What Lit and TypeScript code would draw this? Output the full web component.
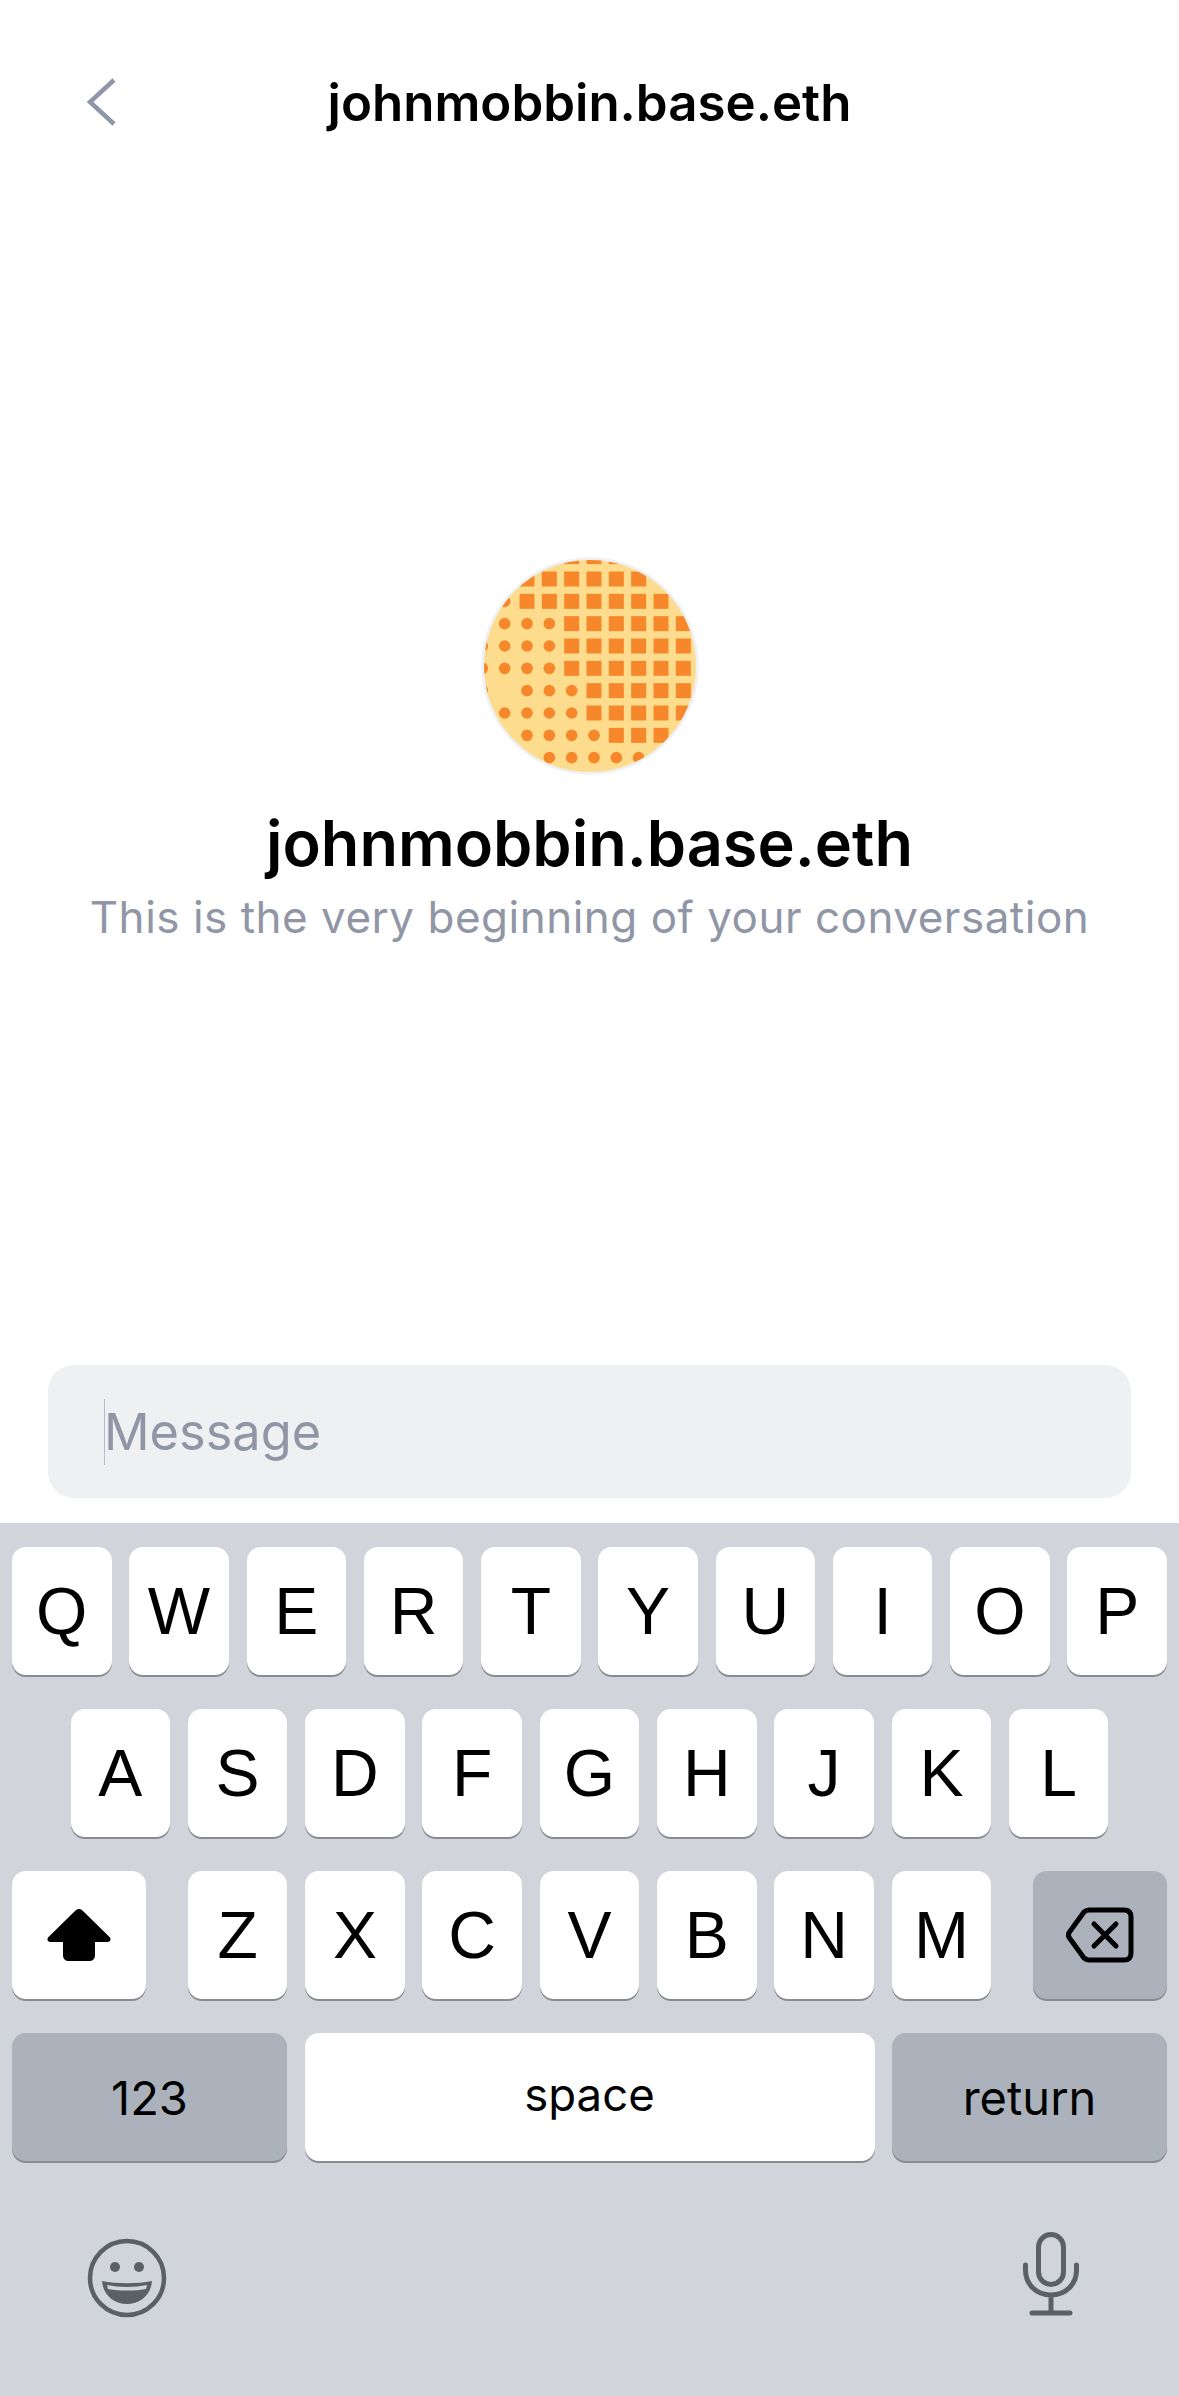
import { LitElement, html, css, svg } from 'lit';
import { customElement } from 'lit/decorators.js';

// avatar pattern: s = square, d = dot, . = empty, one string per row
const PATTERN = [
  '....sss...',
  '..ssssss..',
  '.dsssssss.',
  '.dddssssss',
  'ddddssssss',
  'ddddssssss',
  'd.dddsssss',
  '.ddddsssss',
  '..ddddssss',
  '...dddddd.',
];

const ROW_1 = ['Q', 'W', 'E', 'R', 'T', 'Y', 'U', 'I', 'O', 'P'];
const ROW_2 = ['A', 'S', 'D', 'F', 'G', 'H', 'J', 'K', 'L'];
const ROW_3 = ['Z', 'X', 'C', 'V', 'B', 'N', 'M'];

@customElement('app-root')
export class AppRoot extends LitElement {
  static styles = css`
    :host {
      display: block;
      width: 1179px;
      height: 2396px;
      background: #fff;
      font-family: Inter, 'Liberation Sans', sans-serif;
    }
    .screen {
      display: flex;
      flex-direction: column;
      height: 100%;
    }

    .header {
      display: grid;
      grid-template-columns: 1fr auto 1fr;
      align-items: center;
      height: 204px;
      padding: 0 87px;
      box-sizing: border-box;
      flex: none;
    }
    .back {
      display: block;
      width: 30px;
      height: 48px;
    }
    .header-title {
      font-size: 51px;
      font-weight: 600;
      color: #000;
      white-space: nowrap;
    }

    .intro {
      flex: 1;
      display: flex;
      flex-direction: column;
      align-items: center;
      padding-top: 352px;
    }
    .avatar {
      display: block;
      width: 220px;
      height: 220px;
    }
    .name {
      margin-top: 30px;
      font-size: 63px;
      line-height: 74px;
      font-weight: 600;
      color: #000;
    }
    .hint {
      margin-top: 7px;
      font-size: 44px;
      line-height: 60px;
      color: #9196a6;
      letter-spacing: 0.5px;
    }

    .composer {
      flex: none;
      display: flex;
      align-items: center;
      height: 133px;
      margin: 0 48px 25px;
      padding: 0 56px;
      border-radius: 26px;
      background: #eff0f2;
      font-size: 50.5px;
      color: #9196a6;
    }
    .caret {
      width: 1px;
      height: 66px;
      margin-right: -1px;
      background: #b4bad2;
    }

    .keyboard {
      flex: none;
      display: flex;
      flex-direction: column;
      gap: 34px;
      height: 873px;
      box-sizing: border-box;
      padding: 24px 12px 0;
      background: #d1d5db;
    }
    .row {
      display: flex;
      justify-content: space-between;
    }
    .row.middle {
      justify-content: center;
      gap: 17.8px;
    }
    .row.letters {
      width: 803.3px;
    }
    .key {
      display: flex;
      align-items: center;
      justify-content: center;
      width: 99.5px;
      height: 128px;
      border-radius: 14px;
      background: #fff;
      box-shadow: 0 2px 0 #888b90;
      color: #000;
      font-family: 'Liberation Sans', Arial, sans-serif;
      font-size: 66px;
    }
    .key.fn {
      background: #abb2bc;
    }
    .key.wide {
      width: 134px;
    }
    .key.label {
      font-family: Inter, 'Liberation Sans', sans-serif;
      font-size: 47px;
    }
    .key.num {
      width: 275px;
    }
    .key.space {
      width: 570px;
      padding-bottom: 6px;
      box-sizing: border-box;
      font-size: 45.5px;
    }

    .tools {
      display: flex;
      justify-content: space-between;
      align-items: flex-start;
      margin-top: 37px;
      padding: 0 88px 0 75px;
    }
    .tools svg {
      display: block;
    }
    .tools .emoji {
      margin-top: 6px;
    }
  `;

  private renderAvatar() {
    const cells = PATTERN.flatMap((row, r) =>
      [...row].map((cell, c) => {
        const x = 67 + c * 67;
        const y = 52 + r * 67;
        if (cell === 's') {
          return svg`<rect x=${x - 22.5} y=${y - 22.5} width="45" height="45" />`;
        }
        if (cell === 'd') {
          return svg`<circle cx=${x} cy=${y} r="17.5" />`;
        }
        return null;
      })
    );
    return html`
      <svg class="avatar" viewBox="60 50 660 660">
        <defs>
          <clipPath id="avatar-clip"><circle cx="390" cy="380" r="318" /></clipPath>
        </defs>
        <circle cx="390" cy="380" r="326" fill="#eef0f3" />
        <circle cx="390" cy="380" r="318" fill="#fedc8d" />
        <g clip-path="url(#avatar-clip)" fill="#f6872a">${cells}</g>
      </svg>
    `;
  }

  private renderKey(letter: string) {
    return html`<div class="key">${letter}</div>`;
  }

  render() {
    return html`
      <div class="screen">
        <div class="header">
          <svg class="back" viewBox="0 0 30 48">
            <path d="M27 2 L3 24 L27 46" fill="none" stroke="#8e96a8" stroke-width="4.5" />
          </svg>
          <div class="header-title">johnmobbin.base.eth</div>
        </div>

        <div class="intro">
          ${this.renderAvatar()}
          <div class="name">johnmobbin.base.eth</div>
          <div class="hint">This is the very beginning of your conversation</div>
        </div>

        <div class="composer"><span class="caret"></span>Message</div>

        <div class="keyboard">
          <div class="row">${ROW_1.map(k => this.renderKey(k))}</div>
          <div class="row middle">${ROW_2.map(k => this.renderKey(k))}</div>
          <div class="row">
            <div class="key wide">
              <svg width="66" height="54" viewBox="0 0 66 54">
                <path
                  d="M33 1 C34.5 1 35.5 1.6 36.5 2.6 L63.5 29 C65.5 31 64.5 34 61.5 34 H49 V47 C49 51 46.5 53 43 53 H23 C19.5 53 17 51 17 47 V34 H4.5 C1.5 34 .5 31 2.5 29 L29.5 2.6 C30.5 1.6 31.5 1 33 1 Z"
                  fill="#000"
                />
              </svg>
            </div>
            <div class="row letters">${ROW_3.map(k => this.renderKey(k))}</div>
            <div class="key wide fn">
              <svg width="68" height="56" viewBox="0 0 68 56">
                <path
                  d="M23 3 H58 C62.500 3 65 5.500 65 10 V46 C65 50.500 62.500 53 58 53 H23 C21 53 19.500 52.200 18 51 L3.500 31 C2 29 2 27 3.500 25 L18 5 C19.500 3.800 21 3 23 3 Z"
                  fill="none"
                  stroke="#000"
                  stroke-width="5"
                  stroke-linejoin="round"
                />
                <path d="M28 17 L50 39 M50 17 L28 39" stroke="#000" stroke-width="5" stroke-linecap="round" />
              </svg>
            </div>
          </div>
          <div class="row">
            <div class="key fn label num">123</div>
            <div class="key label space">space</div>
            <div class="key fn label num">return</div>
          </div>
          <div class="tools">
            <svg class="emoji" width="80" height="80" viewBox="0 0 80 80">
              <circle cx="40" cy="40" r="37" fill="none" stroke="#5b5f67" stroke-width="4.500" />
              <circle cx="28" cy="29" r="5" fill="#5b5f67" />
              <circle cx="52" cy="29" r="5" fill="#5b5f67" />
              <path d="M15 43 C30 46 50 46 65 43 C64 57 53 66 40 66 C27 66 16 57 15 43 Z" fill="#5b5f67" />
              <path d="M20 47 C32 49.500 48 49.500 60 47 L59 51 C47 53 33 53 21 51 Z" fill="#d1d5db" />
            </svg>
            <svg class="mic" width="56" height="84" viewBox="0 0 56 84">
              <rect x="15.500" y="2.500" width="25" height="50" rx="12.500" fill="none" stroke="#5b5f67" stroke-width="5" />
              <path
                d="M2.500 33 V38 C2.500 52 13 63 28 63 C43 63 53.500 52 53.500 38 V33 M28 63 V80 M9 81 H47"
                fill="none"
                stroke="#5b5f67"
                stroke-width="5"
                stroke-linecap="round"
              />
            </svg>
          </div>
        </div>
      </div>
    `;
  }
}
